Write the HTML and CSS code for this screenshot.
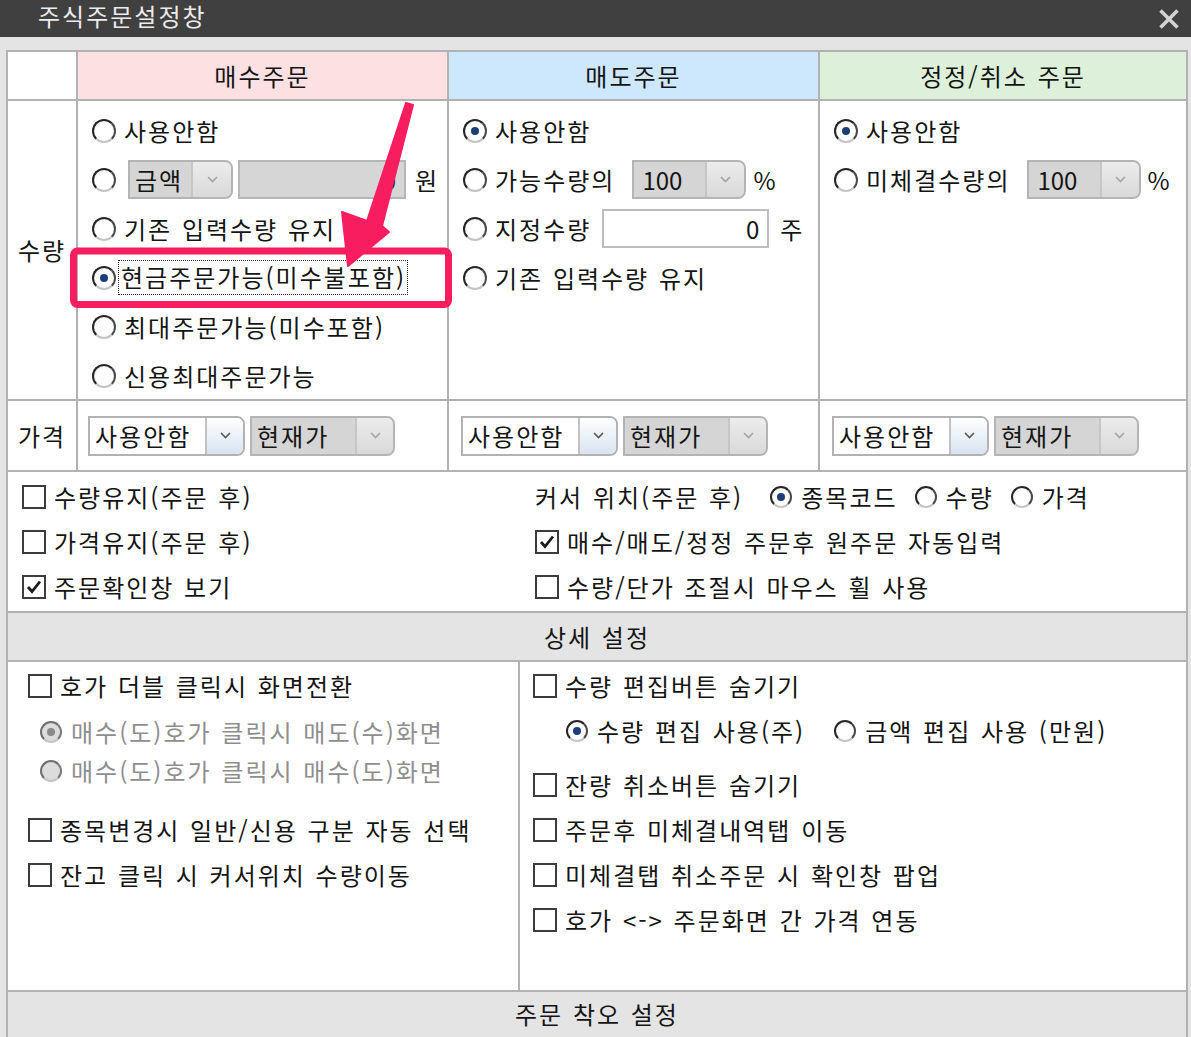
FILE: index.html
```html
<!DOCTYPE html>
<html lang="ko">
<head>
<meta charset="utf-8">
<title>주식주문설정창</title>
<link rel="stylesheet" href="styles.css">
</head>
<body>
<div class="titlebar">
  <span class="title">주식주문설정창</span>
  <svg class="close" width="22" height="22" viewBox="0 0 22 22"><path d="M2.5 2.5L19.5 19.5M19.5 2.5L2.5 19.5" stroke="#d2d2d2" stroke-width="3.6" fill="none"/></svg>
</div>
<div class="client">
  <div class="frame">
    <div class="top">
      <div class="cell"></div>
      <div class="cell head buy">매수주문</div>
      <div class="cell head sell">매도주문</div>
      <div class="cell head mod">정정/취소 주문</div>

      <div class="cell label">수량</div>
      <div class="cell qty">
        <div class="row"><span class="radio"></span><span class="tx">사용안함</span></div>
        <div class="row"><span class="radio"></span>
          <span class="combo dis w-amt ml4"><span class="ct">금액</span><span class="cb"><svg width="11" height="7" viewBox="0 0 11 7"><path d="M1 1l4.5 4.5L10 1" fill="none" stroke="#a4a4a4" stroke-width="1.6"/></svg></span></span>
          <span class="field dis w-won num">0</span><span class="tx ml9">원</span>
        </div>
        <div class="row"><span class="radio"></span><span class="tx">기존 입력수량 유지</span></div>
        <div class="row"><span class="radio on"></span><span class="tx focus">현금주문가능(미수불포함)</span></div>
        <div class="row"><span class="radio"></span><span class="tx">최대주문가능(미수포함)</span></div>
        <div class="row"><span class="radio"></span><span class="tx">신용최대주문가능</span></div>
      </div>
      <div class="cell qty">
        <div class="row"><span class="radio on"></span><span class="tx">사용안함</span></div>
        <div class="row"><span class="radio"></span><span class="tx">가능수량의</span>
          <span class="combo dis w-pct ml17"><span class="ct pl8 num">100</span><span class="cb"><svg width="11" height="7" viewBox="0 0 11 7"><path d="M1 1l4.5 4.5L10 1" fill="none" stroke="#a4a4a4" stroke-width="1.6"/></svg></span></span>
          <span class="tx ml7">%</span>
        </div>
        <div class="row"><span class="radio"></span><span class="tx">지정수량</span>
          <span class="field w-qty ml11 num">0</span><span class="tx ml11">주</span>
        </div>
        <div class="row"><span class="radio"></span><span class="tx">기존 입력수량 유지</span></div>
      </div>
      <div class="cell qty">
        <div class="row"><span class="radio on"></span><span class="tx">사용안함</span></div>
        <div class="row"><span class="radio"></span><span class="tx">미체결수량의</span>
          <span class="combo dis w-pct ml17"><span class="ct pl8 num">100</span><span class="cb"><svg width="11" height="7" viewBox="0 0 11 7"><path d="M1 1l4.5 4.5L10 1" fill="none" stroke="#a4a4a4" stroke-width="1.6"/></svg></span></span>
          <span class="tx ml6">%</span>
        </div>
      </div>

      <div class="cell label">가격</div>
      <div class="cell price">
        <span class="combo w-use"><span class="ct">사용안함</span><span class="cb"><svg width="11" height="7" viewBox="0 0 11 7"><path d="M1 1l4.5 4.5L10 1" fill="none" stroke="#555" stroke-width="1.6"/></svg></span></span>
        <span class="combo dis w-cur"><span class="ct">현재가</span><span class="cb"><svg width="11" height="7" viewBox="0 0 11 7"><path d="M1 1l4.5 4.5L10 1" fill="none" stroke="#a4a4a4" stroke-width="1.6"/></svg></span></span>
      </div>
      <div class="cell price p-sell">
        <span class="combo w-use"><span class="ct">사용안함</span><span class="cb"><svg width="11" height="7" viewBox="0 0 11 7"><path d="M1 1l4.5 4.5L10 1" fill="none" stroke="#555" stroke-width="1.6"/></svg></span></span>
        <span class="combo dis w-cur"><span class="ct">현재가</span><span class="cb"><svg width="11" height="7" viewBox="0 0 11 7"><path d="M1 1l4.5 4.5L10 1" fill="none" stroke="#a4a4a4" stroke-width="1.6"/></svg></span></span>
      </div>
      <div class="cell price p-sell">
        <span class="combo w-use"><span class="ct">사용안함</span><span class="cb"><svg width="11" height="7" viewBox="0 0 11 7"><path d="M1 1l4.5 4.5L10 1" fill="none" stroke="#555" stroke-width="1.6"/></svg></span></span>
        <span class="combo dis w-cur"><span class="ct">현재가</span><span class="cb"><svg width="11" height="7" viewBox="0 0 11 7"><path d="M1 1l4.5 4.5L10 1" fill="none" stroke="#a4a4a4" stroke-width="1.6"/></svg></span></span>
      </div>
    </div>

    <div class="opts">
      <div class="col">
        <div class="orow"><span class="cbx"></span><span class="tx">수량유지(주문 후)</span></div>
        <div class="orow"><span class="cbx"></span><span class="tx">가격유지(주문 후)</span></div>
        <div class="orow"><span class="cbx"><svg width="18" height="18" viewBox="0 0 18 18"><path d="M3 9l4 4.5L15 3.5" fill="none" stroke="#1a1a1a" stroke-width="2.8"/></svg></span><span class="tx">주문확인창 보기</span></div>
      </div>
      <div class="col">
        <div class="orow"><span class="tx">커서 위치(주문 후)</span>
          <span class="radio sm on ml27"></span><span class="tx">종목코드</span>
          <span class="radio sm ml17"></span><span class="tx">수량</span>
          <span class="radio sm ml17"></span><span class="tx">가격</span>
        </div>
        <div class="orow"><span class="cbx"><svg width="18" height="18" viewBox="0 0 18 18"><path d="M3 9l4 4.5L15 3.5" fill="none" stroke="#1a1a1a" stroke-width="2.8"/></svg></span><span class="tx">매수/매도/정정 주문후 원주문 자동입력</span></div>
        <div class="orow"><span class="cbx"></span><span class="tx">수량/단가 조절시 마우스 휠 사용</span></div>
      </div>
    </div>

    <div class="bar">상세 설정</div>

    <div class="detail">
      <div class="dcol dleft">
        <div class="orow"><span class="cbx"></span><span class="tx">호가 더블 클릭시 화면전환</span></div>
        <div class="sub">
          <div class="srow"><span class="radio sm dis on"></span><span class="tx gray">매수(도)호가 클릭시 매도(수)화면</span></div>
          <div class="srow"><span class="radio sm dis"></span><span class="tx gray">매수(도)호가 클릭시 매수(도)화면</span></div>
        </div>
        <div class="orow"><span class="cbx"></span><span class="tx">종목변경시 일반/신용 구분 자동 선택</span></div>
        <div class="orow"><span class="cbx"></span><span class="tx">잔고 클릭 시 커서위치 수량이동</span></div>
      </div>
      <div class="dcol dright">
        <div class="orow"><span class="cbx"></span><span class="tx">수량 편집버튼 숨기기</span></div>
        <div class="sub subr">
          <div class="srow"><span class="radio sm on"></span><span class="tx">수량 편집 사용(주)</span>
            <span class="radio sm ml29"></span><span class="tx">금액 편집 사용 (만원)</span></div>
        </div>
        <div class="orow"><span class="cbx"></span><span class="tx">잔량 취소버튼 숨기기</span></div>
        <div class="orow"><span class="cbx"></span><span class="tx">주문후 미체결내역탭 이동</span></div>
        <div class="orow"><span class="cbx"></span><span class="tx">미체결탭 취소주문 시 확인창 팝업</span></div>
        <div class="orow"><span class="cbx"></span><span class="tx">호가 &lt;-&gt; 주문화면 간 가격 연동</span></div>
      </div>
    </div>

    <div class="bar last">주문 착오 설정</div>
  </div>
</div>

<svg class="annot" width="1191" height="1037" viewBox="0 0 1191 1037">
  <rect x="73.5" y="251" width="375" height="53.5" rx="4" fill="none" stroke="#f81d5f" stroke-width="7"/>
  <polygon points="406,103 413,105 382,226 389,232 348,266 342,212 367,221" fill="#f81d5f" stroke="#f81d5f" stroke-width="2" stroke-linejoin="round"/>
</svg>
</body>
</html>
```

FILE: styles.css
```css
* { box-sizing: border-box; }
html, body { margin: 0; padding: 0; }
body {
  width: 1191px;
  height: 1037px;
  overflow: hidden;
  position: relative;
  background: #e4e4e4;
  font-family: "Noto Sans CJK KR", "Noto Sans", sans-serif;
  font-size: 24px;
  color: #141414;
  letter-spacing: 2px;
  word-spacing: 1px;
}
.num { letter-spacing: 0; }

.titlebar {
  height: 37px;
  background: #404040;
  display: flex;
  align-items: center;
  justify-content: space-between;
  padding: 0 11px 0 38px;
}
.title { color: #ececec; line-height: 1; margin-bottom: 5px; }
.close { display: block; margin-top: 1px; }

.client { padding: 13px 3px 0 6px; }
.frame {
  background: #b2b2b2;
  padding: 2px 2px 0;
  display: flex;
  flex-direction: column;
  gap: 2px;
}

.top {
  display: grid;
  grid-template-columns: 68px 369px 369px 366px;
  grid-template-rows: 47px 298px 69px;
  gap: 2px;
}
.cell { background: #fff; }
.head { display: flex; align-items: center; justify-content: center; line-height: 1; }
.buy { background: #fde1e2; }
.sell { background: #cde8fc; }
.mod { background: #ddf0d9; }
.label { display: flex; align-items: center; padding-left: 10px; line-height: 1; }

.qty { padding: 5px 0 0 14px; }
.row { display: flex; align-items: center; height: 49px; white-space: nowrap; }
.tx { line-height: 1; white-space: nowrap; }
.gray { color: #8e8e8e; }

.radio {
  width: 24px;
  height: 24px;
  flex: none;
  border-radius: 50%;
  border: 2px solid #262626;
  border-color: #262626 #4a4a4a #c4c4c4 #262626;
  background: radial-gradient(circle at 55% 60%, #ffffff 50%, #e6e6e6 100%);
  margin-right: 8px;
  position: relative;
}
.radio.sm { width: 22px; height: 22px; margin-right: 9px; }
.radio.on::after {
  content: "";
  position: absolute;
  left: 50%;
  top: 50%;
  width: 8px;
  height: 8px;
  margin: -4px 0 0 -4px;
  border-radius: 50%;
  background: #1b3d78;
}
.radio.dis {
  border-color: #6e6e6e #7a7a7a #c4c4c4 #6e6e6e;
  background: #dcdcdc;
}
.radio.dis.on::after { background: #8a8a8a; }

.focus {
  border: 1px dotted #222;
  padding: 4px 1px 5px 2px;
  margin-left: -6px;
}

.combo {
  display: inline-flex;
  flex: none;
  height: 39px;
  border: 2px solid #b2b2b2;
  border-radius: 0 8px 8px 0;
  overflow: hidden;
  background: #fff;
}
.combo .ct { flex: 1; display: flex; align-items: center; padding-left: 5px; line-height: 1; }
.combo .cb {
  width: 40px;
  flex: none;
  border-left: 2px solid #c2c2c2;
  display: flex;
  align-items: center;
  justify-content: center;
  background: linear-gradient(#ffffff, #d8e4f1);
}
.combo.dis { background: #d5d5d5; border-color: #b4b4b4; }
.combo.dis .cb { background: linear-gradient(#ececec, #d9d9d9); border-left-color: #c6c6c6; }
.pl8 { padding-left: 8px !important; }

.w-amt { width: 105px; }
.w-pct { width: 114px; }
.w-pct .cb { width: 39px; }
.w-use { width: 157px; height: 40px; }
.w-use .cb, .w-cur .cb { width: 38px; }
.w-cur { width: 145px; height: 40px; }

.field {
  display: inline-flex;
  flex: none;
  align-items: center;
  justify-content: flex-end;
  height: 39px;
  border: 2px solid #bdbdbd;
  background: #fff;
  padding-right: 8px;
  line-height: 1;
}
.field.dis { background: #d6d6d6; border-color: #b6b6b6; margin-left: 5px; }
.w-won { width: 168px; }
.w-qty { width: 167px; }

.ml4 { margin-left: 4px; }
.ml6 { margin-left: 6px; }
.ml7 { margin-left: 7px; }
.ml9 { margin-left: 9px; }
.ml11 { margin-left: 11px; }
.ml17 { margin-left: 17px; }
.ml27 { margin-left: 27px; }
.ml29 { margin-left: 29px; }

.price { display: flex; align-items: center; gap: 5px; padding-left: 10px; }
.p-sell { padding-left: 12px; }

.opts {
  background: #fff;
  height: 139px;
  display: grid;
  grid-template-columns: 513px 1fr;
  padding: 2px 0 0 14px;
}
.col { display: flex; flex-direction: column; }
.orow { display: flex; align-items: center; height: 45px; white-space: nowrap; }

.cbx {
  width: 24px;
  height: 24px;
  flex: none;
  border: 2px solid #3c3c3c;
  background: #fff;
  margin-right: 8px;
  display: flex;
  align-items: center;
  justify-content: center;
}
.cbx svg { display: block; }

.bar {
  background: #e4e4e4;
  height: 47px;
  display: flex;
  align-items: center;
  justify-content: center;
  line-height: 1;
}
.bar.last { height: 60px; padding-bottom: 16px; }

.detail {
  display: grid;
  grid-template-columns: 510px 666px;
  gap: 2px;
  height: 328px;
}
.dcol { background: #fff; display: flex; flex-direction: column; padding-top: 1px; }
.dleft { padding-left: 20px; }
.dright { padding-left: 13px; }
.sub { margin: 4px 0 17px 12px; }
.subr { margin: 3px 0 12px 33px; }
.srow { display: flex; align-items: center; height: 39px; white-space: nowrap; }

.annot { position: absolute; left: 0; top: 0; pointer-events: none; }
```
